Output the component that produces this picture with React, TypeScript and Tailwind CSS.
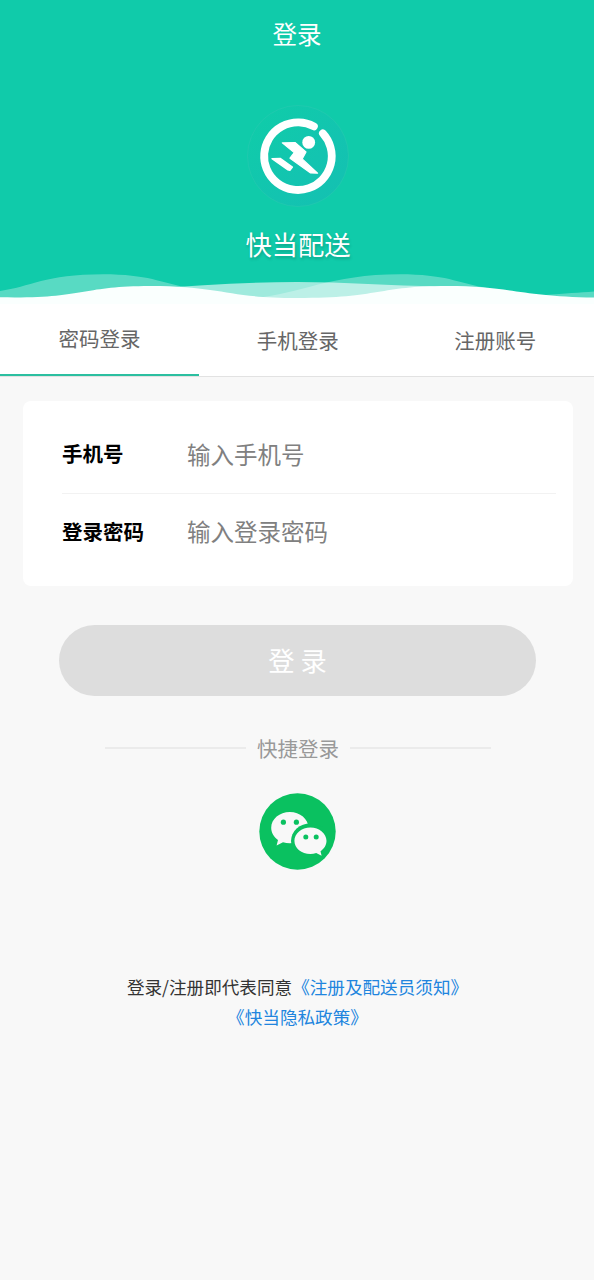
import React, { useState } from 'react';

const tabs = ['密码登录', '手机登录', '注册账号'];

const fields = [
  { label: '手机号', placeholder: '输入手机号', type: 'tel' },
  { label: '登录密码', placeholder: '输入登录密码', type: 'password' },
];

const Logo: React.FC = () => (
  <svg className="h-[104px] w-[104px]" viewBox="0 0 104 104" fill="none">
    <defs>
      <linearGradient id="logoBg" x1="0" y1="0" x2="1" y2="1">
        <stop offset="0.15" stopColor="#10cbaa" />
        <stop offset="0.6" stopColor="#13c4b0" />
        <stop offset="1" stopColor="#14c0b2" />
      </linearGradient>
    </defs>
    <circle cx="52" cy="52" r="50.5" fill="url(#logoBg)" stroke="#22c9af" strokeWidth="0.8" />
    <path d="M67.9 22.4 A33.8 33.8 0 1 0 76.9 29.4" stroke="#fff" strokeWidth="7.8" strokeLinecap="round" />
    <circle cx="62.7" cy="38.4" r="6.4" fill="#fff" />
    <path
      d="M36.3 38.9L49.3 38.6L60 48L56.2 54.9L71.6 69.2L64.6 68.9L44 54.2L48.2 48.6Z"
      fill="#fff"
      stroke="#fff"
      strokeWidth="1.2"
      strokeLinejoin="round"
    />
    <path
      d="M26 54.6L34.2 54.4L46.4 63L43.9 66.2L41.6 65.8Z"
      fill="#fff"
      stroke="#fff"
      strokeWidth="1.4"
      strokeLinejoin="round"
    />
  </svg>
);

const Waves: React.FC = () => (
  <svg className="block h-9 w-full" viewBox="0 268 594 36" preserveAspectRatio="none">
    <path
      d="M0 291 C30 287 45 274.3 103 274.3 C148 274.3 162 283 185 287 C205 291 225 300 255 298 C300 294 330 274.3 400 274.3 C445 274.3 459 283 482 287 C502 291 520 297 545 295 C565 293.5 580 292.5 594 291.5 V304 H0Z"
      fill="#fff"
      fillOpacity="0.3"
    />
    <path
      d="M150 289 C200 285 250 282 297 282 C345 282 390 285.5 440 286.5 V304 H150Z"
      fill="#fff"
      fillOpacity="0.6"
    />
    <path
      d="M0 297.3 C85 299 80 286 150 286 C222 286 225 298 297 298 C382 298 377 286 447 286 C510 286 520 296.5 594 297.5 V304 H0Z"
      fill="#fafffe"
    />
  </svg>
);

const WechatIcon: React.FC = () => (
  <svg className="h-[77px] w-[77px]" viewBox="0 0 77 77">
    <circle cx="38.5" cy="38.5" r="38.2" fill="#0ac160" />
    <path
      d="M30.8 19C20.6 19 12.2 26 12.2 34.8C12.2 39.7 14.8 44 19 46.9L17.6 52.5L24 49.3C26.2 50 28.5 50.3 30.8 50.3C41 50.3 49.4 43.4 49.4 34.7C49.4 26 41 19 30.8 19Z"
      fill="#f8f8f8"
    />
    <ellipse cx="51.4" cy="47.8" rx="19.4" ry="17.3" fill="#0ac160" />
    <path
      d="M51.4 34.4C42.5 34.4 35.4 40.4 35.4 47.8C35.4 55.2 42.5 61 51.4 61C53.4 61 55.4 60.6 57.2 60.1L62.6 62.8L61.5 58.2C65.2 55.8 67.5 52.1 67.5 47.8C67.5 40.4 60.3 34.4 51.4 34.4Z"
      fill="#f8f8f8"
    />
    <circle cx="24.4" cy="29.2" r="2.6" fill="#0ac160" />
    <circle cx="37.4" cy="29.2" r="2.6" fill="#0ac160" />
    <circle cx="46.8" cy="43.9" r="2.5" fill="#0ac160" />
    <circle cx="57.2" cy="43.9" r="2.5" fill="#0ac160" />
  </svg>
);

export default function App() {
  const [active, setActive] = useState<number>(0);

  return (
    <div className="min-h-screen w-full bg-[#f8f8f8] font-['Noto_Sans_CJK_SC',sans-serif]">
      <header className="flex h-[304px] flex-col items-center bg-[#10cbaa] text-white">
        <h1 className="mt-4 text-[24.5px] leading-9">登录</h1>
        <div className="mt-[52px] pl-0.5">
          <Logo />
        </div>
        <div className="mt-[18px] pl-0.5 text-[26.3px] leading-9 [text-shadow:1px_2px_3px_rgba(0,0,0,0.2)]">
          快当配送
        </div>
        <div className="mt-auto w-full">
          <Waves />
        </div>
      </header>

      <nav className="flex h-[73px] border-b border-[#e2e2e2] bg-white text-[20.5px] text-[#666]">
        {tabs.map((tab, index) => (
          <button
            key={tab}
            onClick={() => setActive(index)}
            className={
              index === active
                ? 'w-[199px] border-b-2 border-[#2cbfa0] pb-0.5'
                : 'flex-1 pt-px'
            }
          >
            {tab}
          </button>
        ))}
      </nav>

      <main className="flex flex-col items-center pl-0.5">
        <div className="mt-6 h-[185px] w-[550px] rounded-lg bg-white pt-[15px] pr-[17px] pl-[39px]">
          {fields.map((field, index) => (
            <label
              key={field.label}
              className={
                index === 0
                  ? 'flex h-[78px] items-center border-b border-[#f2f2f2]'
                  : 'flex h-[76px] items-center'
              }
            >
              <span className="w-[125px] pb-0.5 text-[20.5px] font-bold text-black">{field.label}</span>
              <input
                type={field.type}
                placeholder={field.placeholder}
                className="min-w-0 flex-1 text-[23.5px] outline-none placeholder:text-[#808080]"
              />
            </label>
          ))}
        </div>

        <button className="mt-[39px] mr-px h-[71px] w-[477px] rounded-full bg-[#ddd] pb-0.5 text-[26.3px] text-white">
          登 录
        </button>

        <div className="mt-[37px] flex w-[386px] items-center gap-[11px] text-[20.5px] leading-[30px] text-[#999]">
          <span className="h-0.5 flex-1 bg-[#ebebeb]" />
          快捷登录
          <span className="h-0.5 flex-1 bg-[#ebebeb]" />
        </div>

        <button className="mt-[30px] mr-px">
          <WechatIcon />
        </button>

        <p className="mt-[102px] mr-px text-center text-[17.6px] leading-[30px] text-[#333]">
          登录/注册即代表同意<a className="text-[#2185de]">《注册及配送员须知》</a>
          <br />
          <a className="text-[#2185de]">《快当隐私政策》</a>
        </p>
      </main>
    </div>
  );
}
